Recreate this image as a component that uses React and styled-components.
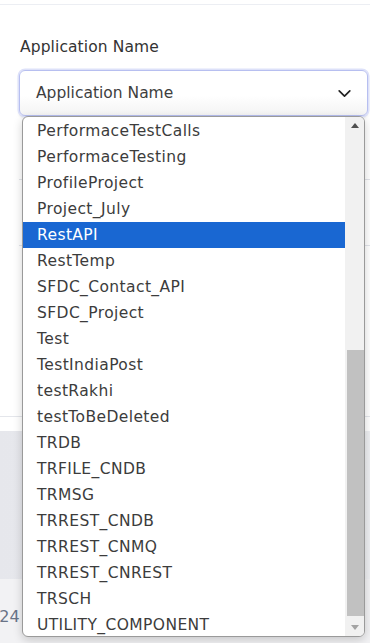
import React from "react";
import styled, { createGlobalStyle } from "styled-components";

const GlobalStyle = createGlobalStyle`
  html, body {
    margin: 0;
    padding: 0;
    background: #ffffff;
  }
  body {
    font-family: "DejaVu Sans", "Open Sans", sans-serif;
    overflow: hidden;
  }
`;

const apps = [
    "PerformaceTestCalls",
    "PerformaceTesting",
    "ProfileProject",
    "Project_July",
    "RestAPI",
    "RestTemp",
    "SFDC_Contact_API",
    "SFDC_Project",
    "Test",
    "TestIndiaPost",
    "testRakhi",
    "testToBeDeleted",
    "TRDB",
    "TRFILE_CNDB",
    "TRMSG",
    "TRREST_CNDB",
    "TRREST_CNMQ",
    "TRREST_CNREST",
    "TRSCH",
    "UTILITY_COMPONENT",
];

const App = () => (
    <>
        <GlobalStyle />
        <Page>
            <TopEdge />
            <Card>
                <Field>
                    <Label>Application Name</Label>
                    <SelectWrap>
                        <SelectBox>
                            <SelectValue>Application Name</SelectValue>
                            <Chevron viewBox="0 0 16 16">
                                <path d="M3 5.5 L8 10.5 L13 5.5" />
                            </Chevron>
                        </SelectBox>
                        <Dropdown>
                            <OptionList>
                                {
                                    apps.map((name) => (
                                        <Option key={ name } $active={ name === "RestAPI" }>{ name }</Option>
                                    ))
                                }
                            </OptionList>
                            <Scrollbar>
                                <ArrowButton>
                                    <Arrow viewBox="0 0 8 5"><path d="M0 5 L4 0 L8 5 Z" /></Arrow>
                                </ArrowButton>
                                <Track>
                                    <Thumb />
                                </Track>
                                <ArrowButton>
                                    <Arrow viewBox="0 0 8 5" $disabled><path d="M0 0 L4 5 L8 0 Z" /></Arrow>
                                </ArrowButton>
                            </Scrollbar>
                        </Dropdown>
                    </SelectWrap>
                </Field>
                <Divider $gap={ 63 } />
                <Divider $gap={ 65 } />
            </Card>
            <Backdrop />
            <Footer>2024 ©</Footer>
        </Page>
    </>
);

const Page = styled.div({
    display: "flex",
    flexDirection: "column",
    width: 370,
    height: 643,
    background: "#ffffff",
    overflow: "hidden",
});

const TopEdge = styled.div({
    height: 4,
    borderBottom: "1px solid #eceef3",
});

const Card = styled.div({
    display: "flex",
    flexDirection: "column",
    height: 412,
    padding: "0 2px 0 19px",
    borderBottom: "1px solid #e4e6eb",
    boxSizing: "border-box",
});

const Field = styled.div({
    display: "flex",
    flexDirection: "column",
    paddingTop: 30,
});

const Label = styled.div({
    marginLeft: 1,
    fontSize: 15.5,
    lineHeight: "24px",
    color: "#333333",
    letterSpacing: 0.1,
    marginBottom: 11,
});

const SelectWrap = styled.div({
    position: "relative",
});

const SelectBox = styled.div({
    display: "flex",
    alignItems: "center",
    justifyContent: "space-between",
    height: 46,
    boxSizing: "border-box",
    padding: "0 16px 0 16px",
    border: "1px solid #b7bff0",
    borderRadius: 6,
    background: "linear-gradient(#ffffff 55%, #f4f4f4)",
    boxShadow: "0 0 0 1.5px #dde1f9, 0 2px 3px rgba(0, 0, 0, 0.12)",
});

const SelectValue = styled.span({
    fontSize: 15.5,
    color: "#3e3e3e",
});

const Chevron = styled.svg({
    width: 17,
    height: 17,
    fill: "none",
    stroke: "#222222",
    strokeWidth: 1.6,
    strokeLinecap: "round",
    strokeLinejoin: "round",
    marginRight: -2,
});

const Divider = styled.div`
    margin-top: ${ (p) => p.$gap }px;
    margin-right: -2px;
    border-bottom: 1px solid #e2e4ea;
`;

const Dropdown = styled.div({
    position: "absolute",
    top: "100%",
    left: 3,
    width: 343,
    height: 521,
    zIndex: 10,
    display: "flex",
    boxSizing: "border-box",
    border: "1px solid #9a9a9a",
    borderRadius: 6,
    background: "#ffffff",
    overflow: "hidden",
    boxShadow: "0 3px 10px rgba(0, 0, 0, 0.18)",
});

const OptionList = styled.div({
    flex: 1,
    display: "flex",
    flexDirection: "column",
    paddingTop: 1,
});

const Option = styled.div`
    height: 26px;
    line-height: 26px;
    padding-left: 14px;
    font-size: 15.5px;
    letter-spacing: 0.4px;
    white-space: nowrap;
    color: ${ (p) => (p.$active ? "#ffffff" : "#3c3c3c") };
    background: ${ (p) => (p.$active ? "#1967d2" : "transparent") };
`;

const Scrollbar = styled.div({
    width: 19,
    display: "flex",
    flexDirection: "column",
    background: "#f1f1f1",
});

const ArrowButton = styled.div({
    height: 17,
    display: "flex",
    alignItems: "center",
    justifyContent: "center",
});

const Arrow = styled.svg`
    width: 8px;
    height: 5px;
    fill: ${ (p) => (p.$disabled ? "#a3a3a3" : "#505050") };
`;

const Track = styled.div({
    flex: 1,
    display: "flex",
    flexDirection: "column",
    justifyContent: "flex-end",
    padding: "0 0 3px 2px",
});

const Thumb = styled.div({
    height: 266,
    background: "#c1c1c1",
});

const Backdrop = styled.div({
    height: 148,
    marginTop: 14,
    background: "linear-gradient(90deg, #e6e7ec, #eeeff2)",
});

const Footer = styled.div({
    flex: 1,
    paddingTop: 29,
    paddingLeft: 0,
    textIndent: -21,
    fontSize: 16,
    lineHeight: "18px",
    color: "#6a7487",
    background: "#f2f2f4",
    whiteSpace: "nowrap",
});

export default App;
